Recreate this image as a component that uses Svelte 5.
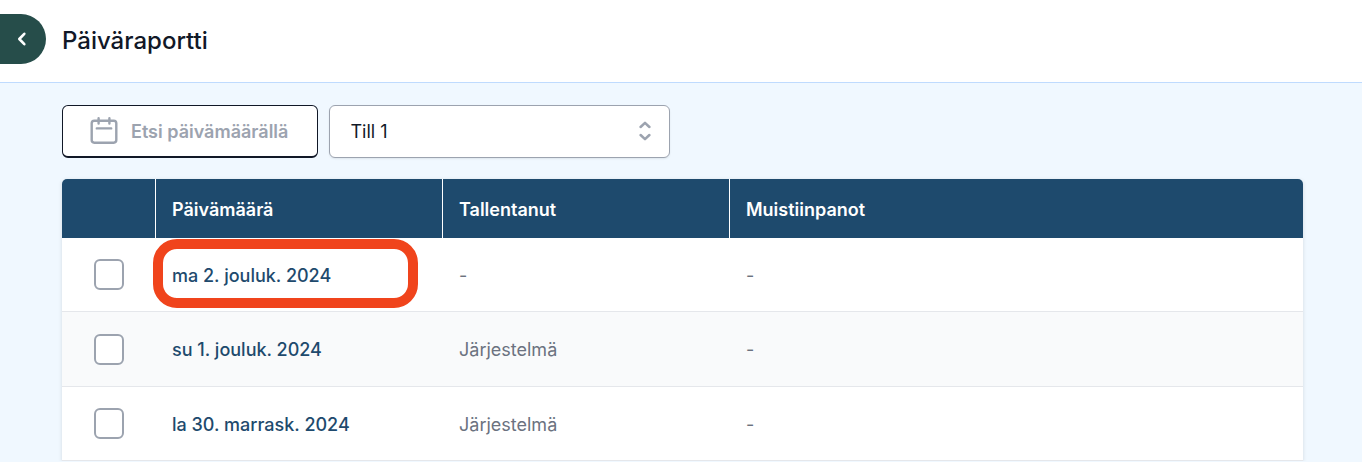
<script>
  let till = $state('Till 1');

  const rows = [
    { id: 1, date: 'ma 2. jouluk. 2024', savedBy: '-', notes: '-', highlighted: true },
    { id: 2, date: 'su 1. jouluk. 2024', savedBy: 'Järjestelmä', notes: '-', highlighted: false },
    { id: 3, date: 'la 30. marrask. 2024', savedBy: 'Järjestelmä', notes: '-', highlighted: false }
  ];
</script>

<div class="page">
  <header>
    <button class="back" aria-label="Takaisin">
      <svg width="10" height="16" viewBox="0 0 10 16" fill="none" aria-hidden="true">
        <path d="M7.3 2.8 2.3 8l5 5.2" stroke="currentColor" stroke-width="2.6" stroke-linecap="round" stroke-linejoin="round" />
      </svg>
    </button>
    <h1>Päiväraportti</h1>
  </header>

  <main>
    <div class="filters">
      <button class="date-search">
        <svg width="28" height="28" viewBox="0 0 28 28" fill="none" stroke="currentColor" stroke-width="2.4" stroke-linecap="round" aria-hidden="true">
          <rect x="1.7" y="3.7" width="24.6" height="22" rx="2.6" />
          <path d="M8.6 1.2v5.4M19.4 1.2v5.4M6.8 11.4h14.4" />
        </svg>
        <span>Etsi päivämäärällä</span>
      </button>

      <div class="till">
        <select bind:value={till} aria-label="Till">
          <option>Till 1</option>
        </select>
        <svg width="12" height="20" viewBox="0 0 12 20" fill="none" stroke="currentColor" stroke-width="2.5" stroke-linecap="round" stroke-linejoin="round" aria-hidden="true">
          <path d="M1.6 6 6 1.8 10.4 6M1.6 14 6 18.2l4.4-4.2" />
        </svg>
      </div>
    </div>

    <table>
      <thead>
        <tr>
          <th class="pick"></th>
          <th class="mid">Päivämäärä</th>
          <th class="mid">Tallentanut</th>
          <th>Muistiinpanot</th>
        </tr>
      </thead>
      <tbody>
        {#each rows as row (row.id)}
          <tr>
            <td class="pick"><input type="checkbox" aria-label={row.date} /></td>
            <td class:highlighted={row.highlighted}><a href="#report-{row.id}">{row.date}</a></td>
            <td>{row.savedBy}</td>
            <td>{row.notes}</td>
          </tr>
        {/each}
      </tbody>
    </table>
  </main>
</div>

<style>
  :global(body) {
    margin: 0;
    background: #f0f8ff;
  }

  .page {
    font-family: Inter, 'Liberation Sans', sans-serif;
    font-size: 18px;
    line-height: 28px;
    color: #111827;
  }

  header {
    display: flex;
    align-items: center;
    gap: 16px;
    box-sizing: border-box;
    height: 83px;
    padding-bottom: 4px;
    background: #fff;
    border-bottom: 1px solid #bfdbfe;
  }

  .back {
    display: flex;
    align-items: center;
    justify-content: center;
    width: 46px;
    height: 50px;
    padding: 0 2px 0 0;
    border: 0;
    border-radius: 0 25px 25px 0;
    background: #264d4a;
    color: #fff;
  }

  h1 {
    margin: 0;
    padding-top: 4px;
    font-size: 24px;
    line-height: 32px;
    font-weight: 500;
  }

  main {
    padding: 22px 59px 0 62px;
  }

  .filters {
    display: flex;
    gap: 11px;
    margin-bottom: 21px;
  }

  .date-search {
    display: flex;
    align-items: center;
    gap: 13px;
    box-sizing: border-box;
    height: 53px;
    padding: 0 29px 0 27px;
    border: 1px solid #111827;
    border-bottom-width: 2px;
    border-radius: 6px;
    background: #fff;
    color: #9ca3af;
    font: inherit;
    font-weight: 600;
  }

  .date-search span {
    padding-top: 2px;
  }

  .till {
    position: relative;
    flex: 0 1 341px;
  }

  .till select {
    appearance: none;
    box-sizing: border-box;
    width: 100%;
    height: 53px;
    padding: 0 48px 0 20px;
    border: 1px solid #9ca3af;
    border-radius: 6px;
    background: #fff;
    box-shadow: 0 1px 2px rgba(0, 0, 0, 0.08);
    color: #111827;
    font: inherit;
  }

  .till svg {
    position: absolute;
    right: 19px;
    top: 16px;
    color: #9ca3af;
    pointer-events: none;
  }

  table {
    width: 100%;
    table-layout: fixed;
    border-spacing: 0;
    border-radius: 5px 5px 0 0;
    box-shadow: 0 1px 4px rgba(0, 0, 0, 0.12);
  }

  th,
  td {
    box-sizing: border-box;
    padding: 2px 16px 0;
    text-align: left;
    vertical-align: middle;
  }

  th {
    height: 59px;
    background: #1e4a6d;
    color: #fff;
    font-weight: 600;
  }

  th:not(:last-child) {
    border-right: 1px solid #fff;
  }

  th:first-child {
    border-top-left-radius: 5px;
  }

  th:last-child {
    border-top-right-radius: 5px;
  }

  th.pick {
    width: 94px;
  }

  th.mid {
    width: 287px;
  }

  td {
    height: 74px;
    border-bottom: 1px solid #e5e7eb;
    background: #fff;
    color: #6b7280;
  }

  tr:nth-child(even) td {
    height: 75px;
    background: #f9fafb;
  }

  td.pick {
    padding: 0 0 0 32px;
  }

  input {
    appearance: none;
    display: block;
    box-sizing: border-box;
    width: 30px;
    height: 31px;
    margin: 0;
    border: 2px solid #9ca3af;
    border-radius: 6px;
    background: #fff;
  }

  a {
    color: #1e4a6d;
    font-weight: 500;
    text-decoration: none;
  }

  .highlighted {
    position: relative;
  }

  .highlighted::after {
    content: '';
    position: absolute;
    inset: 1px 25px 3px -3px;
    border: 10px solid #f0441c;
    border-radius: 24px;
    pointer-events: none;
  }
</style>
